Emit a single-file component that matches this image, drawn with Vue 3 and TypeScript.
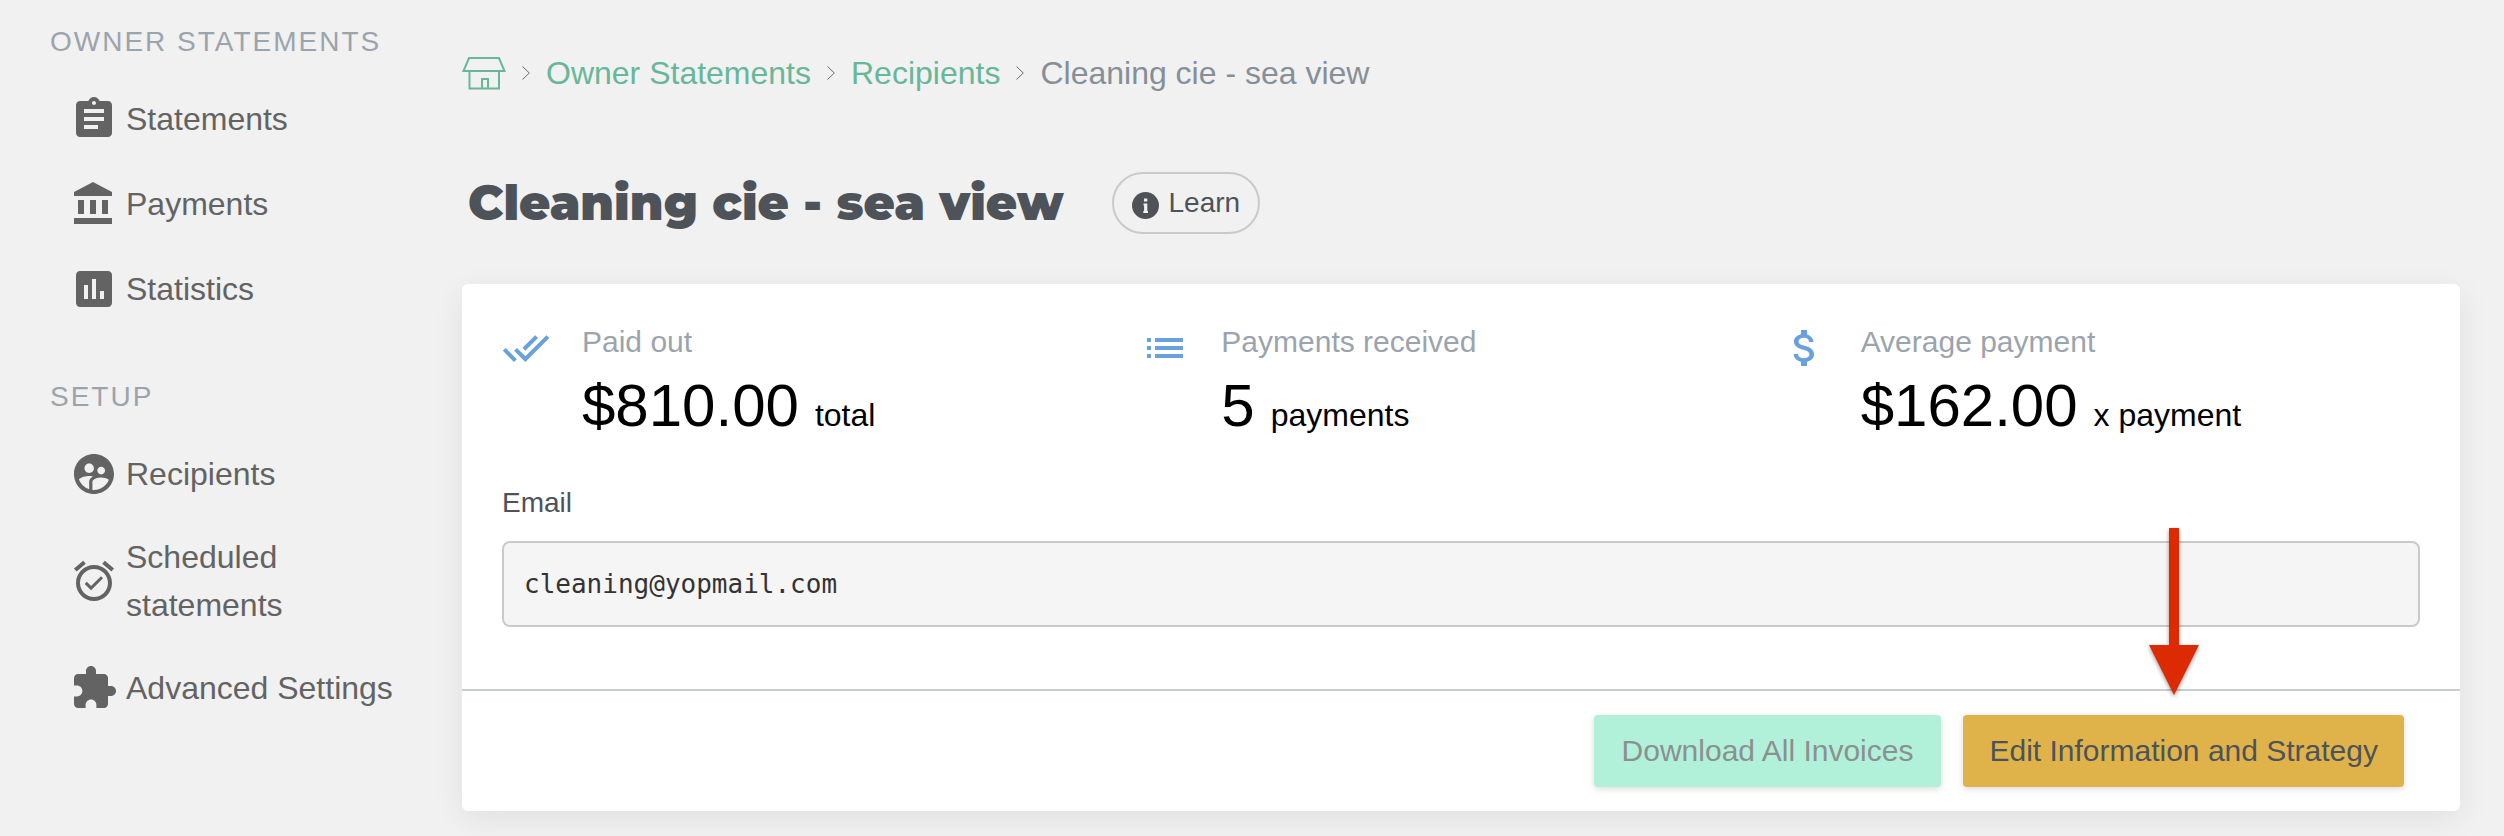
<script setup lang="ts">
interface NavItem {
  label: string
  icon: string
}

interface NavGroup {
  title: string
  items: NavItem[]
}

interface Stat {
  label: string
  value: string
  unit: string
  icon: string
}

const groups: NavGroup[] = [
  {
    title: 'OWNER STATEMENTS',
    items: [
      {
        label: 'Statements',
        icon: 'M19 3h-4.18C14.4 1.84 13.3 1 12 1c-1.3 0-2.4.84-2.82 2H5c-1.1 0-2 .9-2 2v14c0 1.1.9 2 2 2h14c1.1 0 2-.9 2-2V5c0-1.1-.9-2-2-2zm-7 0c.55 0 1 .45 1 1s-.45 1-1 1-1-.45-1-1 .45-1 1-1zm2 14H7v-2h7v2zm3-4H7v-2h10v2zm0-4H7V7h10v2z',
      },
      {
        label: 'Payments',
        icon: 'M4 10v7h3v-7H4zm6 0v7h3v-7h-3zM2 22h19v-3H2v3zm14-12v7h3v-7h-3zm-4.5-9L2 6v2h19V6l-9.5-5z',
      },
      {
        label: 'Statistics',
        icon: 'M19 3H5c-1.1 0-2 .9-2 2v14c0 1.1.9 2 2 2h14c1.1 0 2-.9 2-2V5c0-1.1-.9-2-2-2zM9 17H7v-7h2v7zm4 0h-2V7h2v10zm4 0h-2v-4h2v4z',
      },
    ],
  },
  {
    title: 'SETUP',
    items: [
      {
        label: 'Recipients',
        icon: 'M11.99 2c-5.52 0-10 4.48-10 10s4.48 10 10 10 10-4.48 10-10-4.48-10-10-10zm3.61 6.34c1.07 0 1.93.86 1.93 1.93 0 1.07-.86 1.93-1.93 1.93-1.07 0-1.93-.86-1.93-1.93-.01-1.07.86-1.93 1.93-1.93zm-6-1.58c1.3 0 2.36 1.06 2.36 2.36 0 1.3-1.06 2.36-2.36 2.36s-2.36-1.06-2.36-2.36c0-1.31 1.05-2.36 2.36-2.36zm0 9.13v3.75c-2.4-.75-4.3-2.6-5.14-4.96 1.05-1.12 3.67-1.69 5.14-1.69.53 0 1.2.08 1.9.22-1.64.87-1.9 2.02-1.9 2.68zM11.99 20c-.27 0-.53-.01-.79-.04v-4.07c0-1.42 2.94-2.13 4.4-2.13 1.07 0 2.92.39 3.84 1.15-1.17 2.97-4.06 5.09-7.45 5.09z',
      },
      {
        label: 'Scheduled statements',
        icon: 'M22 5.72l-4.6-3.86-1.29 1.53 4.6 3.86L22 5.72zM7.88 3.39L6.6 1.86 2 5.71l1.29 1.53 4.59-3.85zM12 4c-4.97 0-9 4.03-9 9s4.02 9 9 9c4.97 0 9-4.03 9-9s-4.03-9-9-9zm0 16c-3.87 0-7-3.13-7-7s3.13-7 7-7 7 3.13 7 7-3.13 7-7 7zm-1.46-5.47L8.41 12.4l-1.06 1.06 3.18 3.18 6-6-1.06-1.06-4.93 4.95z',
      },
      {
        label: 'Advanced Settings',
        icon: 'M20.5 11H19V7c0-1.1-.9-2-2-2h-4V3.5C13 2.12 11.88 1 10.5 1S8 2.12 8 3.5V5H4c-1.1 0-1.99.9-1.99 2v3.8H3.5c1.49 0 2.7 1.21 2.7 2.7s-1.21 2.7-2.7 2.7H2V20c0 1.1.9 2 2 2h3.8v-1.5c0-1.49 1.21-2.7 2.7-2.7 1.49 0 2.7 1.21 2.7 2.7V22H17c1.1 0 2-.9 2-2v-4h1.5c1.38 0 2.5-1.12 2.5-2.5S21.88 11 20.5 11z',
      },
    ],
  },
]

const crumbs: string[] = ['Owner Statements', 'Recipients']

const stats: Stat[] = [
  {
    label: 'Paid out',
    value: '$810.00',
    unit: 'total',
    icon: 'M18 7l-1.41-1.41-6.34 6.34 1.41 1.41L18 7zm4.24-1.41L11.66 16.17 7.48 12l-1.41 1.41L11.66 19l12-12-1.42-1.41zM.41 13.41L6 19l1.41-1.41L1.83 12 .41 13.41z',
  },
  {
    label: 'Payments received',
    value: '5',
    unit: 'payments',
    icon: 'M3 13h2v-2H3v2zm0 4h2v-2H3v2zm0-8h2V7H3v2zm4 4h14v-2H7v2zm0 4h14v-2H7v2zM7 7v2h14V7H7z',
  },
  {
    label: 'Average payment',
    value: '$162.00',
    unit: 'x payment',
    icon: 'M11.8 10.9c-2.27-.59-3-1.2-3-2.15 0-1.09 1.01-1.85 2.7-1.85 1.78 0 2.44.85 2.5 2.1h2.21c-.07-1.72-1.12-3.3-3.21-3.81V3h-3v2.16c-1.94.42-3.5 1.68-3.5 3.61 0 2.31 1.91 3.46 4.7 4.13 2.5.6 3 1.48 3 2.41 0 .69-.49 1.79-2.7 1.79-2.06 0-2.87-.92-2.98-2.1h-2.2c.12 2.19 1.76 3.42 3.68 3.83V21h3v-2.15c1.95-.37 3.5-1.5 3.5-3.55 0-2.84-2.43-3.81-4.7-4.4z',
  },
]
</script>

<template>
  <div class="page">
    <aside class="sidebar">
      <nav v-for="group in groups" :key="group.title" class="group" :aria-label="group.title">
        <h2 class="group-title">{{ group.title }}</h2>
        <ul class="group-list">
          <li v-for="item in group.items" :key="item.label">
            <a href="#" class="nav-link">
              <svg class="icon" viewBox="0 0 24 24" aria-hidden="true"><path :d="item.icon" /></svg>
              <span>{{ item.label }}</span>
            </a>
          </li>
        </ul>
      </nav>
    </aside>

    <main class="main">
      <nav class="crumbs" aria-label="Breadcrumb">
        <a href="#" class="home" aria-label="Home">
          <svg viewBox="0 0 44 34" aria-hidden="true">
            <path d="M7 2H37L42.5 15H1.5ZM7.5 15V32.5H37V15M20 32.5V23H26V32.5" />
          </svg>
        </a>
        <template v-for="crumb in crumbs" :key="crumb">
          <svg class="chevron" viewBox="0 0 8 14" aria-hidden="true"><path d="M.5.5L7.3 7L.5 13.5" /></svg>
          <a href="#">{{ crumb }}</a>
        </template>
        <svg class="chevron" viewBox="0 0 8 14" aria-hidden="true"><path d="M.5.5L7.3 7L.5 13.5" /></svg>
        <span class="current" aria-current="page">Cleaning cie - sea view</span>
      </nav>

      <header class="heading">
        <h1>Cleaning cie - sea view</h1>
        <button type="button" class="learn">
          <svg viewBox="0 0 27 27" aria-hidden="true">
            <circle cx="13.5" cy="13.5" r="13.5" />
            <path d="M12 6.5h3.3v3H12zM11.5 11.5h3.8v7.5h.7v2h-4.700v-2h.8v-5.500h-.6z" />
          </svg>
          Learn
        </button>
      </header>

      <section class="card">
        <div class="body">
          <div class="stats">
            <div v-for="stat in stats" :key="stat.label" class="stat">
              <svg class="icon" viewBox="0 0 24 24" aria-hidden="true"><path :d="stat.icon" /></svg>
              <div>
                <div class="stat-label">{{ stat.label }}</div>
                <div class="stat-value">
                  <strong>{{ stat.value }}</strong>
                  <span>{{ stat.unit }}</span>
                </div>
              </div>
            </div>
          </div>
          <label class="field-label" for="email">Email</label>
          <input id="email" class="field" type="email" value="cleaning@yopmail.com" readonly />
        </div>
        <footer class="actions">
          <button type="button" class="btn download" disabled>Download All Invoices</button>
          <div class="edit-wrap">
            <button type="button" class="btn edit">Edit Information and Strategy</button>
            <svg class="arrow" viewBox="0 0 50 167" aria-hidden="true">
              <path d="M20 0H30V117H50L25 167L0 117H20Z" />
            </svg>
          </div>
        </footer>
      </section>
    </main>
  </div>
</template>

<style>
body {
  margin: 0;
  background: #f1f1f1;
}
</style>

<style scoped>
.page {
  display: flex;
  gap: 56px;
  padding: 26px 44px 26px 50px;
  font-family: "Liberation Sans", Arial, sans-serif;
  font-size: 32px;
  line-height: 48px;
  color: #4d5359;
}

a {
  color: inherit;
  text-decoration: none;
}

button,
input {
  font-family: inherit;
  margin: 0;
}

.icon {
  flex: none;
  width: 48px;
  height: 48px;
  fill: currentColor;
}

.sidebar {
  flex: none;
  width: 356px;
  display: flex;
  flex-direction: column;
  gap: 66px;
}

.group-title {
  margin: 0 0 35px;
  font-size: 28px;
  line-height: 32px;
  font-weight: 400;
  letter-spacing: 2px;
  color: #9ba4ac;
}

.group-list {
  display: flex;
  flex-direction: column;
  gap: 33px;
  margin: 0;
  padding: 0 0 0 20px;
  list-style: none;
}

.nav-link {
  display: flex;
  align-items: center;
  gap: 8px;
  min-height: 52px;
  color: #636363;
}

.main {
  flex: 1;
  min-width: 0;
  padding-top: 23px;
}

.crumbs {
  display: flex;
  align-items: center;
  gap: 16px;
  color: #68b799;
}

.home {
  display: flex;
}

.home svg {
  width: 44px;
  height: 34px;
  fill: none;
  stroke: currentColor;
  stroke-width: 2;
}

.chevron {
  width: 8px;
  height: 14px;
  fill: none;
  stroke: #6c6c6c;
}

.current {
  color: #868f98;
}

.heading {
  display: flex;
  align-items: center;
  gap: 48px;
  margin: 75px 0 50px;
  padding-left: 6px;
}

h1 {
  margin: 0;
  font-family: Montserrat, Inter, sans-serif;
  font-size: 48px;
  line-height: 62px;
  font-weight: 900;
}

.learn {
  display: flex;
  align-items: center;
  gap: 10px;
  height: 62px;
  padding: 0 18px;
  border: 2px solid #cacaca;
  border-radius: 31px;
  background: none;
  font-size: 28px;
  color: #4d5359;
}

.learn svg {
  width: 27px;
  height: 27px;
  margin-top: 4px;
  fill: currentColor;
}

.learn path {
  fill: #f1f1f1;
}

.card {
  border-radius: 6px;
  background: #fff;
  box-shadow: 0 8px 32px rgba(0, 0, 0, 0.07);
}

.body {
  padding: 40px 40px 62px;
}

.stats {
  display: grid;
  grid-template-columns: repeat(3, 1fr);
  margin-bottom: 34px;
}

.stat {
  display: flex;
  gap: 32px;
}

.stat .icon {
  color: #68a1de;
}

.stat-label {
  margin-bottom: 10px;
  font-size: 30px;
  line-height: 36px;
  color: #9ba4ac;
}

.stat-value {
  display: flex;
  align-items: baseline;
  gap: 16px;
  line-height: 72px;
  color: #000;
}

.stat-value strong {
  font-size: 60px;
  font-weight: 400;
}

.field-label {
  display: block;
  margin-bottom: 20px;
  font-size: 28px;
  line-height: 36px;
}

.field {
  display: block;
  box-sizing: border-box;
  width: 100%;
  height: 86px;
  padding: 0 20px;
  border: 2px solid #cacaca;
  border-radius: 8px;
  background: #f5f5f5;
  font-family: "DejaVu Sans Mono", monospace;
  font-size: 26px;
  color: #333;
}

.actions {
  display: flex;
  justify-content: flex-end;
  gap: 22px;
  padding: 24px 56px 24px 40px;
  border-top: 2px solid #c7cdd2;
}

.btn {
  height: 72px;
  padding: 0 26px;
  border: 0;
  border-radius: 4px;
  font-size: 30px;
  box-shadow: 0 2px 6px rgba(0, 0, 0, 0.14);
}

.download {
  padding: 0 28px;
  background: #b1f1d9;
  color: #8b9090;
}

.edit {
  background: #e0b34a;
  color: #4d5359;
}

.edit-wrap {
  position: relative;
}

.arrow {
  position: absolute;
  right: 205px;
  bottom: 92px;
  width: 50px;
  height: 167px;
  overflow: visible;
  fill: #dc2b03;
  filter: drop-shadow(0 2px 2px rgba(0, 0, 0, 0.4));
  pointer-events: none;
}
</style>
